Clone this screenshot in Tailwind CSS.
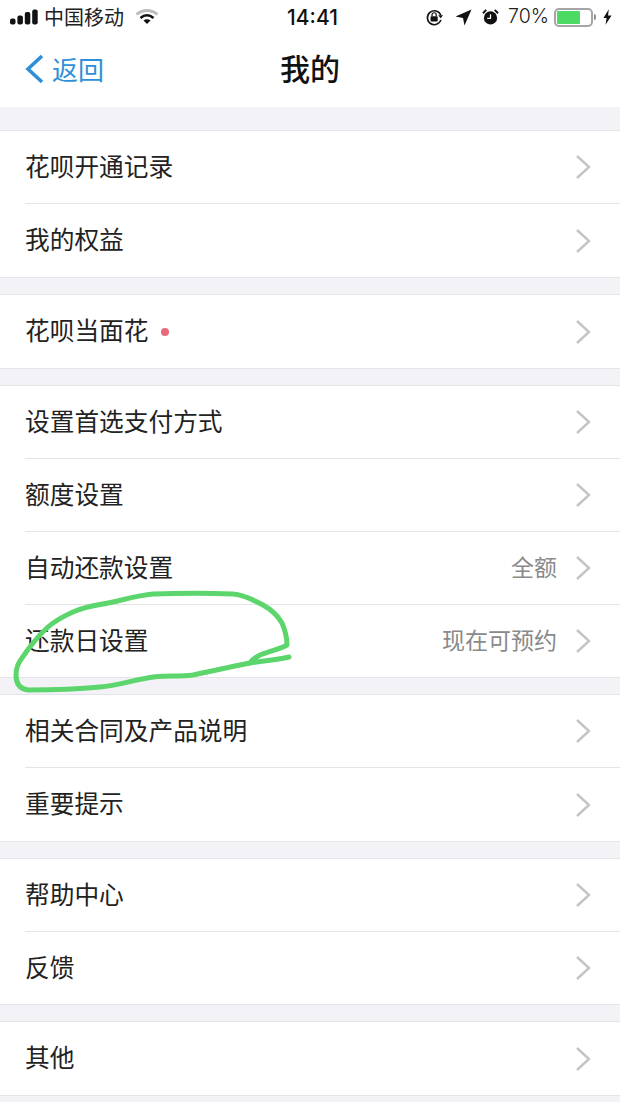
<!DOCTYPE html>
<html lang="zh-CN">
<head>
  <meta charset="UTF-8">
  <title>我的</title>
  <script src="https://cdn.jsdelivr.net/npm/@tailwindcss/browser@4"></script>
</head>
<body class="bg-[#f2f2f7] font-['Noto_Sans_CJK_SC','Liberation_Sans',sans-serif]">
  <div class="relative w-[620px] h-[1102px] overflow-hidden">

    <!-- Status bar + nav -->
    <header class="bg-white h-[107px]">
      <div class="h-[34px] flex items-center justify-between pl-[10px] pr-[8px] text-[#111]">
        <div class="flex items-center w-[200px]">
          <svg class="-mt-[1px]" width="28" height="16" viewBox="0 0 28 16" fill="#111">
            <rect x="0" y="9.5" width="5.5" height="6" rx="2"/>
            <rect x="7.4" y="6.5" width="5.5" height="9" rx="2"/>
            <rect x="14.8" y="3" width="5.5" height="12.5" rx="2"/>
            <rect x="22.2" y="0.5" width="5.5" height="15" rx="2"/>
          </svg>
          <span class="ml-[6px] text-[20px] leading-none text-[#222] -mt-[1px]">中国移动</span>
          <svg class="ml-[11px]" width="24" height="18" viewBox="0 0 24 18">
            <path d="M1.5 6.5C7.5 1 16.5 1 22.5 6.5" fill="none" stroke="#bdbdbd" stroke-width="3"/>
            <path d="M5.5 10C9.5 6.5 14.5 6.5 18.5 10" fill="none" stroke="#111" stroke-width="2.6"/>
            <path d="M8.5 12.4L12 16L15.5 12.4C13.5 10.8 10.5 10.8 8.5 12.4Z" fill="#111"/>
          </svg>
        </div>
        <span class="text-[21px] font-medium leading-none font-['Inter',sans-serif] -ml-[10px]">14:41</span>
        <div class="flex items-center">
          <svg width="19" height="19" viewBox="0 0 20 20">
            <path d="M16.6 7.5A7.3 7.3 0 1 0 16.8 12.5" fill="none" stroke="#111" stroke-width="1.7"/>
            <path d="M13.8 7.5H19L16.4 10.8Z" fill="#111"/>
            <rect x="5.8" y="8.6" width="7.6" height="5.6" rx="1" fill="#111"/>
            <path d="M7.4 8.8V7.2A2.2 2.2 0 0 1 11.8 7.2V8.8" fill="none" stroke="#111" stroke-width="1.3"/>
          </svg>
          <svg class="ml-[11px]" width="17" height="17" viewBox="0 0 17 17">
            <path d="M16.5 0.5L9.5 16.5L8 9L0.5 7.5Z" fill="#111"/>
          </svg>
          <svg class="ml-[10px]" width="17" height="18" viewBox="0 0 18 18">
            <circle cx="9" cy="10" r="7" fill="#111"/>
            <path d="M9 6V10.5H5.5" fill="none" stroke="#fff" stroke-width="1.3"/>
            <path d="M1 5L4.5 1.5M17 5L13.5 1.5" stroke="#111" stroke-width="2"/>
          </svg>
          <span class="ml-[9px] text-[19.5px] leading-none text-[#222] font-['Inter',sans-serif] font-light">70%</span>
          <div class="ml-[5px] w-[39px] h-[19px] border-2 border-[#a5a5a5] rounded-[5px] p-[1px] bg-white">
            <div class="h-full w-[23px] bg-[#4cd964] rounded-[1px]"></div>
          </div>
          <div class="ml-[1px] w-[2px] h-[6px] bg-[#8e8e8e] rounded-r-sm"></div>
          <svg class="ml-[7px]" width="9" height="16" viewBox="0 0 10 17">
            <path d="M6.5 0L0.5 9.5H4L2.8 17L9.5 6.8H5.6Z" fill="#111"/>
          </svg>
        </div>
      </div>
      <div class="relative h-[73px] flex items-center justify-center">
        <a class="absolute left-[24px] top-[20px] flex items-center text-[#2f8fd8]">
          <svg width="21" height="30" viewBox="0 0 21 30">
            <path d="M18 2L4 15L18 28" fill="none" stroke="#2f8fd8" stroke-width="3.6"/>
          </svg>
          <span class="ml-[7px] text-[26px] leading-none">返回</span>
        </a>
        <h1 class="text-[30px] leading-none font-medium text-[#111] -mt-[8px]">我的</h1>
      </div>
    </header>

    <main class="pt-[23px] flex flex-col gap-[16px] text-[24.7px] text-[#222]">
      <section class="bg-white border-y border-[#e4e4e8] pl-[25px]">
        <div class="h-[73px] flex items-center justify-between pr-[29px] border-b border-[#e4e4e4]">
          <span class="-mt-[3px]">花呗开通记录</span>
          <svg width="16" height="26" viewBox="0 0 16 26"><path d="M2 2L14 13L2 24" fill="none" stroke="#c4c4c6" stroke-width="2.4"/></svg>
        </div>
        <div class="h-[73px] flex items-center justify-between pr-[29px]">
          <span class="-mt-[3px]">我的权益</span>
          <svg width="16" height="26" viewBox="0 0 16 26"><path d="M2 2L14 13L2 24" fill="none" stroke="#c4c4c6" stroke-width="2.4"/></svg>
        </div>
      </section>

      <section class="bg-white border-y border-[#e4e4e8] pl-[25px]">
        <div class="h-[73px] flex items-center justify-between pr-[29px]">
          <span class="-mt-[3px] flex items-center">花呗当面花<i class="ml-[13px] mt-[4px] w-[8px] h-[8px] rounded-full bg-[#e96a7c]"></i></span>
          <svg width="16" height="26" viewBox="0 0 16 26"><path d="M2 2L14 13L2 24" fill="none" stroke="#c4c4c6" stroke-width="2.4"/></svg>
        </div>
      </section>

      <section class="bg-white border-y border-[#e4e4e8] pl-[25px]">
        <div class="h-[73px] flex items-center justify-between pr-[29px] border-b border-[#e4e4e4]">
          <span class="-mt-[3px]">设置首选支付方式</span>
          <svg width="16" height="26" viewBox="0 0 16 26"><path d="M2 2L14 13L2 24" fill="none" stroke="#c4c4c6" stroke-width="2.4"/></svg>
        </div>
        <div class="h-[73px] flex items-center justify-between pr-[29px] border-b border-[#e4e4e4]">
          <span class="-mt-[3px]">额度设置</span>
          <svg width="16" height="26" viewBox="0 0 16 26"><path d="M2 2L14 13L2 24" fill="none" stroke="#c4c4c6" stroke-width="2.4"/></svg>
        </div>
        <div class="h-[73px] flex items-center justify-between pr-[29px] border-b border-[#e4e4e4]">
          <span class="-mt-[3px]">自动还款设置</span>
          <span class="flex items-center">
            <span class="-mt-[3px] text-[23px] text-[#8a8a8a] mr-[18px]">全额</span>
            <svg width="16" height="26" viewBox="0 0 16 26"><path d="M2 2L14 13L2 24" fill="none" stroke="#c4c4c6" stroke-width="2.4"/></svg>
          </span>
        </div>
        <div class="h-[72px] flex items-center justify-between pr-[29px]">
          <span class="-mt-[3px]">还款日设置</span>
          <span class="flex items-center">
            <span class="-mt-[3px] text-[23px] text-[#8a8a8a] mr-[18px]">现在可预约</span>
            <svg width="16" height="26" viewBox="0 0 16 26"><path d="M2 2L14 13L2 24" fill="none" stroke="#c4c4c6" stroke-width="2.4"/></svg>
          </span>
        </div>
      </section>

      <section class="bg-white border-y border-[#e4e4e8] pl-[25px]">
        <div class="h-[73px] flex items-center justify-between pr-[29px] border-b border-[#e4e4e4]">
          <span class="-mt-[3px]">相关合同及产品说明</span>
          <svg width="16" height="26" viewBox="0 0 16 26"><path d="M2 2L14 13L2 24" fill="none" stroke="#c4c4c6" stroke-width="2.4"/></svg>
        </div>
        <div class="h-[73px] flex items-center justify-between pr-[29px]">
          <span class="-mt-[3px]">重要提示</span>
          <svg width="16" height="26" viewBox="0 0 16 26"><path d="M2 2L14 13L2 24" fill="none" stroke="#c4c4c6" stroke-width="2.4"/></svg>
        </div>
      </section>

      <section class="bg-white border-y border-[#e4e4e8] pl-[25px]">
        <div class="h-[73px] flex items-center justify-between pr-[29px] border-b border-[#e4e4e4]">
          <span class="-mt-[3px]">帮助中心</span>
          <svg width="16" height="26" viewBox="0 0 16 26"><path d="M2 2L14 13L2 24" fill="none" stroke="#c4c4c6" stroke-width="2.4"/></svg>
        </div>
        <div class="h-[72px] flex items-center justify-between pr-[29px]">
          <span class="-mt-[3px]">反馈</span>
          <svg width="16" height="26" viewBox="0 0 16 26"><path d="M2 2L14 13L2 24" fill="none" stroke="#c4c4c6" stroke-width="2.4"/></svg>
        </div>
      </section>

      <section class="bg-white border-y border-[#e4e4e8] pl-[25px]">
        <div class="h-[73px] flex items-center justify-between pr-[29px]">
          <span class="-mt-[3px]">其他</span>
          <svg width="16" height="26" viewBox="0 0 16 26"><path d="M2 2L14 13L2 24" fill="none" stroke="#c4c4c6" stroke-width="2.4"/></svg>
        </div>
      </section>
    </main>

    <!-- hand drawn marker on the screenshot -->
    <svg class="absolute left-0 top-0 pointer-events-none" width="620" height="1102" viewBox="0 0 620 1102">
      <path d="M289 657C276 660 262 661 250 663C230 667 212 671 193 675C177 677 162 675 147 678C130 681 116 686 100 687C80 689 50 690 28 690C20 689 16 684 16 675C16 668 18 663 22 658C30 646 38 636 48 627C56 620 64 616 73 612C86 606 100 605 113 602C126 599 140 595 153 594C180 593 210 593 233 594C244 595 254 600 263 605C272 610 278 616 282 623C285 630 287 638 287 645C280 649 268 652 260 655C256 657 252 660 250 663" fill="none" stroke="#5cd66c" stroke-width="5" stroke-linecap="round" stroke-linejoin="round"/>
    </svg>
  </div>
</body>
</html>
